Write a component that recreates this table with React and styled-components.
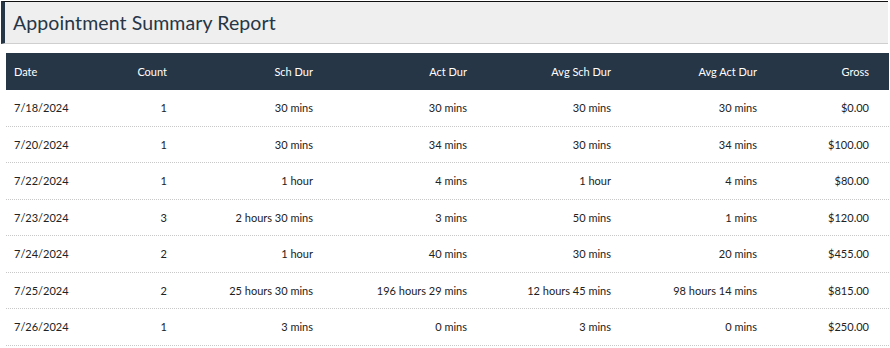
import React from 'react';
import styled, { createGlobalStyle } from 'styled-components';

const GlobalStyle = createGlobalStyle`
  body {
    margin: 0;
    background: #fff;
    font-family: Lato, "Open Sans", sans-serif;
  }
`;

const Page = styled.div`
  width: 890px;
  padding-top: 1px;
`;

const TitleBar = styled.div`
  margin: 0 2px 0 1px;
  height: 41px;
  display: flex;
  align-items: center;
  padding-left: 8px;
  background: #efefef;
  border-top: 1px solid #111;
  border-left: 4px solid #263646;
  border-bottom: 1px solid #cfcfcf;
`;

const Title = styled.h1`
  margin: 0;
  font-size: 19.5px;
  font-weight: 400;
  color: #263646;
  letter-spacing: 0.1px;
`;

const Table = styled.div`
  margin: 9px 1px 0 6px;
  width: 883px;
`;

const cols = '94px 75px 146px 154px 144px 146px 112px 12px';

const HeadRow = styled.div`
  display: grid;
  grid-template-columns: ${cols};
  height: 37px;
  align-items: center;
  background: #263646;
  color: #fff;
`;

const Row = styled.div`
  display: grid;
  grid-template-columns: ${cols};
  height: 36.5px;
  align-items: center;
  color: #222;
  border-bottom: 1px dotted #c8c8c8;
  box-sizing: border-box;
`;

const Cell = styled.div`
  font-size: 11px;
  padding: 0 8px;
  text-align: ${(p) => (p.$left ? 'left' : 'right')};
  white-space: nowrap;
`;

const headers = ['Date', 'Count', 'Sch Dur', 'Act Dur', 'Avg Sch Dur', 'Avg Act Dur', 'Gross'];

const rows = [
  ['7/18/2024', '1', '30 mins', '30 mins', '30 mins', '30 mins', '$0.00'],
  ['7/20/2024', '1', '30 mins', '34 mins', '30 mins', '34 mins', '$100.00'],
  ['7/22/2024', '1', '1 hour', '4 mins', '1 hour', '4 mins', '$80.00'],
  ['7/23/2024', '3', '2 hours 30 mins', '3 mins', '50 mins', '1 mins', '$120.00'],
  ['7/24/2024', '2', '1 hour', '40 mins', '30 mins', '20 mins', '$455.00'],
  ['7/25/2024', '2', '25 hours 30 mins', '196 hours 29 mins', '12 hours 45 mins', '98 hours 14 mins', '$815.00'],
  ['7/26/2024', '1', '3 mins', '0 mins', '3 mins', '0 mins', '$250.00'],
];

const App = () => (
  <Page>
    <GlobalStyle />
    <TitleBar>
      <Title>Appointment Summary Report</Title>
    </TitleBar>
    <Table>
      <HeadRow>
        {headers.map((h, i) => (
          <Cell key={h} $left={i === 0}>{h}</Cell>
        ))}
        <Cell />
      </HeadRow>
      {rows.map((r) => (
        <Row key={r[0]}>
          {r.map((v, i) => (
            <Cell key={i} $left={i === 0}>{v}</Cell>
          ))}
          <Cell />
        </Row>
      ))}
    </Table>
  </Page>
);

export default App;
